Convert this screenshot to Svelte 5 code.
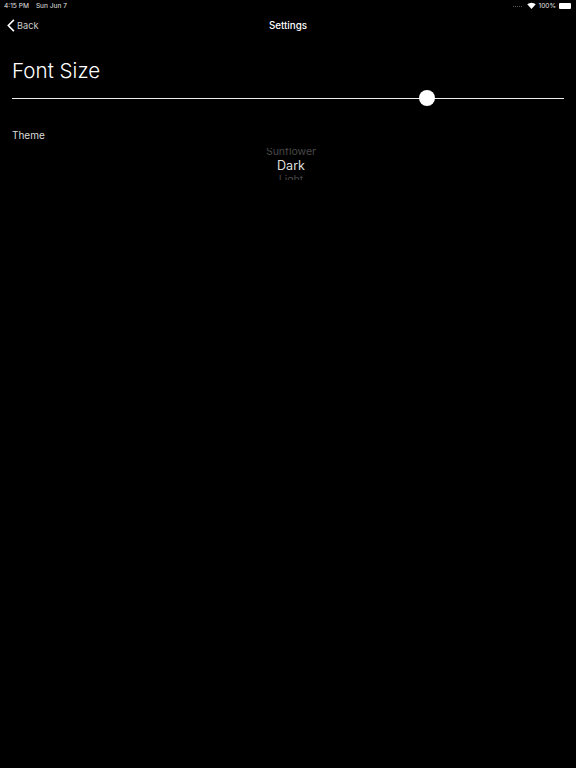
<script>
  const themes = [
    { name: 'Sunflower', cls: 'first' },
    { name: 'Dark', cls: 'on' },
    { name: 'Light', cls: 'last' }
  ];
</script>

<div class="page">
  <div class="status">
    <div class="status-left">
      <span>4:15 PM</span>
      <span>Sun Jun 7</span>
    </div>
    <div class="status-right">
      <span class="signal" aria-hidden="true"></span>
      <svg class="wifi" width="9" height="7" viewBox="0 0 18 14" aria-hidden="true">
        <path d="M9 14 L0.5 4.6 A12.5 12.5 0 0 1 17.5 4.6 Z" fill="#fff" />
      </svg>
      <span>100%</span>
      <div class="battery"></div>
    </div>
  </div>

  <header class="nav">
    <div class="back">
      <svg width="8" height="13" viewBox="0 0 8 13" aria-hidden="true">
        <path d="M6.9 0.9 L1.3 6.5 L6.9 12.1" fill="none" stroke="#fff" stroke-width="1.6" />
      </svg>
      <span>Back</span>
    </div>
    <div class="title">Settings</div>
  </header>

  <main class="content">
    <h1>Font Size</h1>
    <div class="slider">
      <div class="track"></div>
      <div class="thumb"></div>
    </div>
    <div class="label">Theme</div>
    <div class="picker">
      {#each themes as t}
        <div class={t.cls}>{t.name}</div>
      {/each}
    </div>
  </main>
</div>

<style>
  :global(body) {
    margin: 0;
    background: #000;
  }
  .page {
    width: 576px;
    height: 768px;
    background: #000;
    color: #fff;
    font-family: Inter, "Liberation Sans", sans-serif;
    overflow: hidden;
  }
  .status {
    height: 11px;
    display: flex;
    justify-content: space-between;
    align-items: center;
    padding: 0 5px 0 4px;
    font-size: 6.6px;
    color: #e4e4e4;
  }
  .status-left {
    display: flex;
    gap: 7px;
  }
  .status-right {
    display: flex;
    align-items: center;
    gap: 3px;
  }
  .signal {
    width: 9px;
    height: 1px;
    margin-right: 2px;
    margin-top: 2px;
    background: repeating-linear-gradient(90deg, #555 0 1px, transparent 1px 2px);
  }
  .battery {
    width: 12px;
    height: 6px;
    border-radius: 1px;
    background: #fff;
  }
  .nav {
    position: relative;
    height: 28px;
    display: flex;
    align-items: center;
    justify-content: center;
    font-size: 9.8px;
  }
  .title {
    font-weight: 500;
  }
  .back {
    position: absolute;
    left: 7px;
    top: 8px;
    display: flex;
    align-items: center;
    gap: 2px;
    font-size: 9.2px;
    color: #ccc;
  }
  .content {
    padding: 0 12px;
  }
  h1 {
    margin: 0;
    padding-top: 19px;
    font-size: 20.6px;
    line-height: 26px;
    font-weight: 300;
  }
  .slider {
    position: relative;
    height: 18px;
    margin-top: 5px;
    display: flex;
    align-items: center;
  }
  .track {
    width: 100%;
    height: 1px;
    background: #eee;
  }
  .thumb {
    position: absolute;
    left: 407px;
    top: 1px;
    width: 16px;
    height: 16px;
    border-radius: 50%;
    background: #fff;
  }
  .label {
    margin-top: 21px;
    font-size: 10px;
    line-height: 14px;
    color: #ddd;
  }
  .picker {
    height: 32px;
    margin-top: 6px;
    margin-left: 6px;
    overflow: hidden;
    text-align: center;
    font-size: 10.5px;
    line-height: 14px;
  }
  .first {
    color: #484848;
    margin-top: -3px;
  }
  .on {
    font-size: 12.6px;
    color: #ddd;
  }
  .last {
    color: #484848;
  }
</style>
